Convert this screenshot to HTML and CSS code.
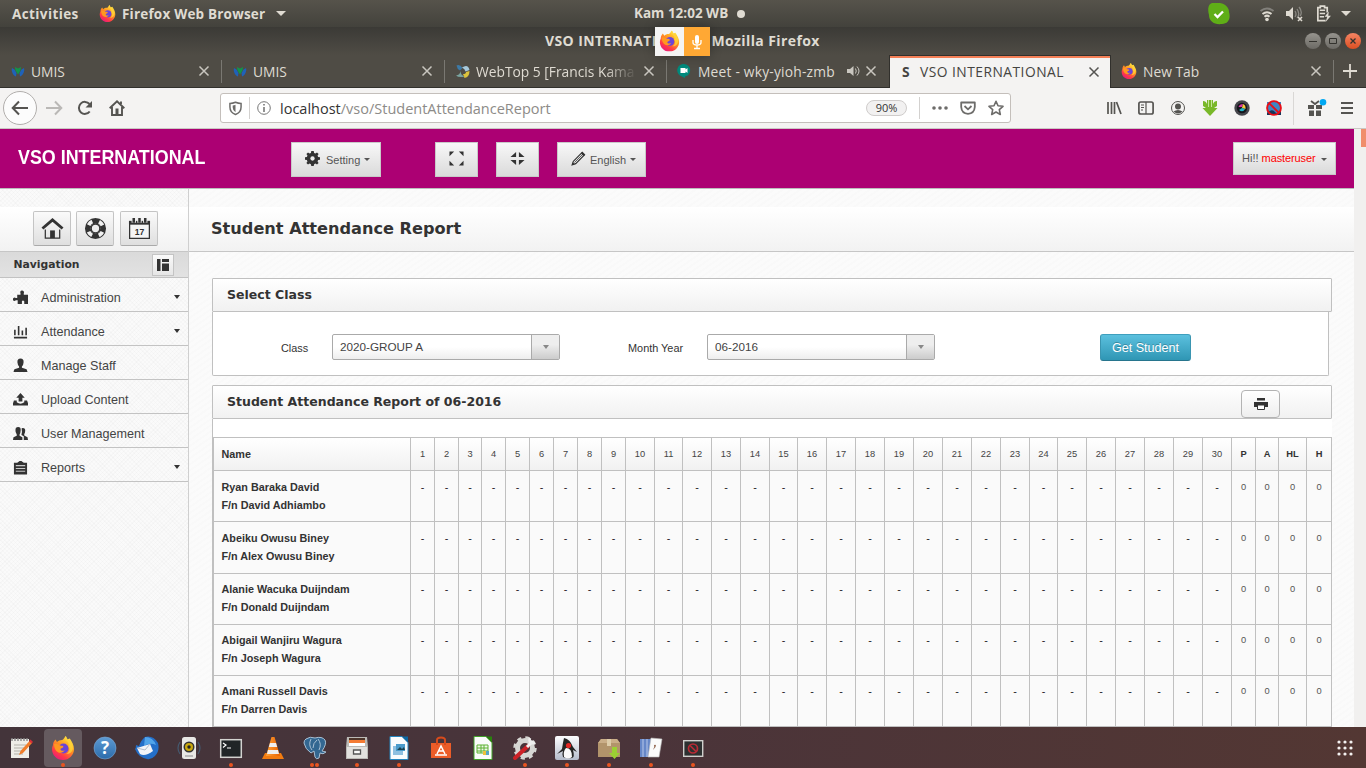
FILE: index.html
```html
<!DOCTYPE html>
<html lang="en">
<head>
<meta charset="utf-8">
<title>VSO INTERNATIONAL</title>
<link rel="stylesheet" href="styles.css">
</head>
<body>
<svg class="defs" aria-hidden="true">
  <defs>
    <linearGradient id="ffBody" x1="0.8" y1="0" x2="0.2" y2="1"><stop offset="0" stop-color="#fff04a"/><stop offset=".4" stop-color="#ff9a1f"/><stop offset=".75" stop-color="#ff3a47"/><stop offset="1" stop-color="#e31587"/></linearGradient>
    <linearGradient id="blue" x1="0" y1="0" x2="0" y2="1"><stop offset="0" stop-color="#5d9ad3"/><stop offset="1" stop-color="#2c6cab"/></linearGradient>
    <linearGradient id="cone" x1="0" y1="0" x2="1" y2="0"><stop offset="0" stop-color="#ffa23a"/><stop offset="1" stop-color="#e86300"/></linearGradient>
    <linearGradient id="steel" x1="0" y1="0" x2="0" y2="1"><stop offset="0" stop-color="#fdfdff"/><stop offset="1" stop-color="#b4bccb"/></linearGradient>
  </defs>
  <symbol id="firefox" viewBox="0 0 24 24">
    <path d="M2 9C2 7 3 5 4.500 3.500L6 6c1.200-1.300 3-2 5-2 1 0 1.800-1.300 3.600-4 1 1 1.400 2.600 1.400 3.500l2.800-1C21 6 23 9 23 13c0 6-4.800 11-11 11S1 19.200 1 13c0-1.400.4-2.700 1-4z" fill="url(#ffBody)"/>
    <circle cx="12.500" cy="12.500" r="5" fill="#6b45d8"/>
    <path d="M3 8c3-1 5 .5 6 1.500 2 .2 3.800.2 3.300 1.500-.6 1.400-2.700 1-2.800 2.300 0 1.500 2 2 4.200 1-1 2.300-4.200 3.200-6.700 2C4.500 15 3 11.500 3 8z" fill="#ff9820"/>
    <path d="M14 3c3.500 2.500 4 5 3.500 7.500C19.500 13 18 17 15 18c5 .5 8-4 6.500-9C20 5.500 17 4.500 14.500 0z" fill="#ffd83a" opacity=".75"/>
  </symbol>
  <symbol id="close" viewBox="0 0 12 12"><path d="M1.500 1.500l9 9M10.500 1.500l-9 9" fill="none" stroke="currentColor" stroke-width="1.500"/></symbol>
  <symbol id="umis" viewBox="0 0 14 14"><path d="M1 4l2.500 1.500L5.500 9 5 12.500C2 11.500 0 7 1 4zM13 4l-2.500 1.500L8.500 9l.5 3.500c3-1 5-5.500 4-8.500z" fill="#1f62b8"/><path d="M4 3l3 1.500L10 3l-.5 3.500L7 10.500 4.500 6.500z" fill="#12944a"/></symbol>
</svg>

<header class="topbar">
  <span class="activities">Activities</span>
  <svg class="tb-fox"><use href="#firefox"/></svg>
  <span class="appname">Firefox Web Browser</span>
  <i class="tri"></i>
  <span class="clock">Kam 12:02 WB</span><i class="clock-dot"></i>
  <div class="tray">
    <svg class="skype" viewBox="0 0 22 22"><path d="M5 0h7c6 1 9 5 9 9 2 7-1 12-7 12C6 22 1 18 1 12-1 5 1 0 5 0z" fill="#5fae17"/><path d="M6.500 11l3 3L15 8.500" fill="none" stroke="#fff" stroke-width="2.300"/></svg>
    <svg class="wifi" viewBox="0 0 16 16" fill="none" stroke-width="2"><path d="M1.500 5Q8 0 14.500 5" stroke="#82807b"/><path d="M3.500 8Q8 4.500 12.500 8M5.500 10.700Q8 8.500 10.500 10.700" stroke="#dfdbd2"/><circle cx="8" cy="13.500" r="1.800" fill="#dfdbd2"/></svg>
    <svg class="vol" viewBox="0 0 17 16"><path d="M0 5h3l4-4v13l-4-4H0z" fill="#dfdbd2"/><path d="M9 5q2 3 0 6M11 3q3.500 5 0 9M13 1q4 5 1 9" fill="none" stroke="#8b8983" stroke-width="1.300"/><path d="M12 11l4 4m0-4l-4 4" stroke="#dfdbd2" stroke-width="1.600"/></svg>
    <svg class="bat" viewBox="0 0 14 16"><path d="M9 14.700H1.700V2.500H4V1h4v1.500h2.500V7" fill="none" stroke="#dfdbd2" stroke-width="1.600"/><path d="M3.500 5h5M3.500 8h5M3.500 11h4" stroke="#dfdbd2" stroke-width="1.500"/><path d="M12 6l-4 5h2.500L9 16l5-6h-2.500z" fill="#dfdbd2"/></svg>
    <i class="tri"></i>
  </div>
</header>

<div class="titlebar">
  <span class="title">VSO INTERNATIONAL - Mozilla Firefox</span>
  <div class="sharing">
    <svg viewBox="0 0 24 24"><use href="#firefox"/></svg>
    <b><svg viewBox="0 0 12 16"><rect x="4" y="1" width="4" height="9" rx="2" fill="#fff"/><path d="M2 6v2.500Q2 11 6 11t4-2.500V6M6 11v3M3 14.500h6" fill="none" stroke="#fff" stroke-width="1.300"/></svg></b>
  </div>
  <div class="winbtns"><i><svg viewBox="0 0 16 16"><path d="M4 8.500h8" stroke="#33322e"/></svg></i><i><svg viewBox="0 0 16 16"><path d="M4.500 5.500h7v5h-7z" stroke="#33322e" fill="none"/></svg></i><i class="x"><svg viewBox="0 0 16 16"><path d="M5.500 5.500l5 5m0-5l-5 5" stroke="#33322e" stroke-width="1.300"/></svg></i></div>
</div>

<nav class="tabs">
  <div class="tab t1"><svg class="fav"><use href="#umis"/></svg><span>UMIS</span><svg class="cl"><use href="#close"/></svg></div>
  <div class="tab t2"><svg class="fav"><use href="#umis"/></svg><span>UMIS</span><svg class="cl"><use href="#close"/></svg></div>
  <div class="tab t3"><svg class="fav" viewBox="0 0 14 14"><path d="M.5 1.500Q4 0 6.500 4L4 6.500Q1 5 .5 1.500z" fill="#3d7aa7"/><path d="M6 3.500Q12-.5 13.500 6L9.500 7.500Q9 5 6 3.500z" fill="#a6c9dc"/><path d="M13.500 7q0 6-5 7L7 10q3 0 3-2z" fill="#dcc43c"/><path d="M4.500 7q0 4 4 5.500Q3 14 0 11.500q4-.5 4.500-4.500z" fill="#7ba5a0"/></svg><span class="fade">WebTop 5 [Francis Kama</span><svg class="cl"><use href="#close"/></svg></div>
  <div class="tab t4"><svg class="fav" viewBox="0 0 14 14"><path d="M7 0a6.300 6.300 0 0 1 1 12.500V14L5 12.400A6.300 6.300 0 0 1 7 0z" fill="#00897b"/><path d="M3.500 4h5v1.500L10.500 4v5L8.500 7.500V9h-5z" fill="#fff"/></svg><span>Meet - wky-yioh-zmb</span><svg class="spk" viewBox="0 0 14 12"><path d="M0 4h3l3.500-3v10L3 8H0z" fill="#c9c6bf"/><path d="M8.500 3.500q1.500 2.500 0 5M10 1.500q4 4.500 0 9" fill="none" stroke="#c9c6bf"/></svg><svg class="cl"><use href="#close"/></svg></div>
  <div class="tab t5"><b>S</b><span>VSO INTERNATIONAL</span><svg class="cl"><use href="#close"/></svg></div>
  <div class="tab t6"><svg class="fav"><use href="#firefox"/></svg><span>New Tab</span><svg class="cl"><use href="#close"/></svg></div>
  <div class="newtab"><svg viewBox="0 0 14 14"><path d="M7 0v14M0 7h14" stroke="#dfdbd2" stroke-width="1.800"/></svg></div>
</nav>

<div class="toolbar">
  <div class="back"><svg viewBox="0 0 18 16"><path d="M17 8H2M8 1.500L1.700 8 8 14.500" fill="none" stroke="#555451" stroke-width="2"/></svg></div>
  <svg class="fwd" viewBox="0 0 18 16"><path d="M1 8h15M10 1.500L16.300 8 10 14.500" fill="none" stroke="#bab8b6" stroke-width="2"/></svg>
  <svg class="reload" viewBox="0 0 16 16"><path d="M12.700 11.500A6 6 0 1 1 12.500 4" fill="none" stroke="#555451" stroke-width="2"/><path d="M15 1v6.500H8.500z" fill="#555451"/></svg>
  <svg class="home" viewBox="0 0 16 16"><path d="M.7 8.300L8 1.300l7.300 7M3 7v8h10V7M12 1.500V4" fill="none" stroke="#555451" stroke-width="1.900"/><path d="M6.500 8.500h3V14h-3z" fill="#555451"/></svg>
  <div class="urlbar">
    <svg class="shield" viewBox="0 0 14 15"><path d="M1 2q3 0 6-1.200Q10 2 13 2v4q0 6-6 8-6-2-6-8z" fill="none" stroke="#6d6c6a" stroke-width="1.600"/><path d="M7 3.500q-1.500.6-3 .7V6.500q0 3.500 3 5z" fill="#6d6c6a"/></svg>
    <i class="vline"></i>
    <svg class="info" viewBox="0 0 14 14"><circle cx="7" cy="7" r="6.300" fill="none" stroke="#777"/><path d="M7 6v5M7 3v1.600" stroke="#777" stroke-width="1.600"/></svg>
    <span class="url"><b>localhost</b>/vso/StudentAttendanceReport</span>
    <span class="zoom">90%</span>
    <i class="vline"></i>
    <svg class="dots" viewBox="0 0 16 4"><circle cx="2" cy="2" r="1.800"/><circle cx="8" cy="2" r="1.800"/><circle cx="14" cy="2" r="1.800"/></svg>
    <svg class="pocket" viewBox="0 0 16 14"><path d="M1.200 1.500h13.600V6q-.5 6.500-6.800 6.800Q1.700 12.500 1.200 6z" fill="none" stroke="#6d6c6a" stroke-width="1.800" stroke-linejoin="round"/><path d="M4.500 5L8 8.300 11.500 5" fill="none" stroke="#6d6c6a" stroke-width="1.800"/></svg>
    <svg class="star" viewBox="0 0 16 16"><path d="M8 1.300l2 4.500 5 .5-3.700 3.300 1 4.900L8 12l-4.300 2.500 1-4.900L1 6.300l5-.5z" fill="none" stroke="#6d6c6a" stroke-width="1.600" stroke-linejoin="round"/></svg>
  </div>
  <div class="ext">
    <span><svg viewBox="0 0 16 16"><path d="M2 2v12M5.500 2v12M8.500 2v12M10.500 2l4.500 12" fill="none" stroke="#555451" stroke-width="1.700"/></svg></span>
    <span><svg viewBox="0 0 16 16"><rect x=".9" y="2" width="14.200" height="12" rx="1.800" fill="none" stroke="#555451" stroke-width="1.700"/><path d="M8 2v12M3 5h3M3 7.500h3M3 10h2" stroke="#555451" stroke-width="1.200"/></svg></span>
    <span><svg viewBox="0 0 16 16"><circle cx="8" cy="8" r="6.500" fill="none" stroke="#555451"/><circle cx="8" cy="6.500" r="3" fill="#555451"/><path d="M3.500 11.500Q8 8.500 12.500 11.500 8 15.500 3.500 11.500z" fill="#555451"/></svg></span>
    <span><svg viewBox="0 0 16 16"><path d="M1 1q3 0 4 3V0h6v4q1-3 4-3v5l-3 2h3.500L8 16 .5 8H4L1 6z" fill="#79b829"/><path d="M6.500 0v7M9.500 0v7" stroke="#c4e596"/></svg></span>
    <span><svg viewBox="0 0 16 16"><circle cx="8" cy="8" r="7.700" fill="#45454b"/><circle cx="8" cy="8" r="5.200" fill="#15151b"/><path d="M4.500 7q1-3 4.500-3L8 7z" fill="#da35a2"/><path d="M9 4q3 1 2.500 5L8 8z" fill="#f5c83e"/><path d="M11 9q-2 4-6 1l3-2z" fill="#20b6c9"/></svg></span>
    <span><svg viewBox="0 0 16 16"><rect x="1" y="2" width="14" height="13" fill="#3f86c4"/><path d="M1 13q5-5 8-1t6-2v5H1z" fill="#173458"/><circle cx="8" cy="8" r="6.900" fill="none" stroke="#e80e17" stroke-width="1.900"/><path d="M3 3l10 10" stroke="#e80e17" stroke-width="1.900"/></svg></span>
  </div>
  <div class="extend">
    <svg class="gift" viewBox="0 0 20 18"><path d="M1 6h6v4H1zM9 6h6v4H9zM2 11.500h5V17H2zM9 11.500h5V17H9z" fill="#555451"/><path d="M4 2l4 3 4-3" fill="none" stroke="#555451" stroke-width="1.800"/><circle cx="16" cy="3.300" r="3.300" fill="#00a8f3"/></svg>
    <svg class="menu" viewBox="0 0 12 12"><path d="M0 1h12M0 6h12M0 11h12" stroke="#555451" stroke-width="2"/></svg>
  </div>
</div>

<div class="viewport">
  <div class="page">
    <header class="masthead">
      <div class="brand">VSO INTERNATIONAL</div>
      <button class="mbtn b-set"><svg viewBox="0 0 16 16"><path d="M6.700 0h2.600l.4 2 1.400.6L12.800 1.500l1.700 1.700-1.100 1.700.6 1.400 2 .4v2.600l-2 .4-.6 1.400 1.100 1.700-1.700 1.700-1.700-1.100-1.400.6-.4 2H6.700l-.4-2-1.400-.6-1.700 1.100-1.700-1.700 1.100-1.700L2 9.700l-2-.4V6.700l2-.4.6-1.400L1.500 3.200l1.700-1.700 1.700 1.100L6.300 2z" fill="#333"/><circle cx="8" cy="8" r="2.300" fill="#ececec"/></svg><span>Setting</span><i class="caret"></i></button>
      <button class="mbtn b-full"><svg viewBox="0 0 16 16" fill="#333"><path d="M.5.500h5l-5 5zM15.500.500v5l-5-5zM.5 15.500v-5l5 5zM15.500 15.500h-5l5-5z"/></svg></button>
      <button class="mbtn b-comp"><svg viewBox="0 0 16 16" fill="#333"><path d="M6.500 6.500h-6l6-5.500zM9.500 6.500V1l6 5.500zM6.500 9.500V15l-6-5.500zM9.500 9.500h6l-6 5.500z"/></svg></button>
      <button class="mbtn b-lang"><svg viewBox="0 0 16 16"><path d="M2.500 11L12 1.500l2.500 2.500L5 13.500l-3.800 1.300z" fill="#eee" stroke="#333" stroke-width="1.200"/><path d="M3.700 12.300L13 3" stroke="#333" stroke-width=".8"/><path d="M12 1l3 3-1.500 1.500-3-3zM1 15l1-3 2 2z" fill="#333"/></svg><span>English</span><i class="caret"></i></button>
      <button class="mbtn b-user"><span>Hi!! <em>masteruser</em></span><i class="caret"></i></button>
    </header>
    <div class="columns">
      <aside class="side">
        <div class="quick">
          <button><svg viewBox="0 0 24 24"><path d="M1.500 12L12 3l10.500 9" fill="none" stroke="#333" stroke-width="3"/><path d="M4.500 13v9h15v-9" fill="none" stroke="#333" stroke-width="1.300"/><path d="M9.500 14h5v8h-5z" fill="#333"/></svg></button>
          <button><svg viewBox="0 0 24 24"><circle cx="12" cy="12" r="8" fill="none" stroke="#333" stroke-width="6"/><circle cx="12" cy="12" r="8" fill="none" stroke="#f1f1f1" stroke-width="4" stroke-dasharray="5.300 7.266" stroke-dashoffset="-3.600"/><circle cx="12" cy="12" r="4.500" fill="#eee" stroke="#333" stroke-width="1.400"/></svg></button>
          <button><svg viewBox="0 0 24 24"><path d="M1.700 5h20.600v17.300H1.700z" fill="#f5f5f5" stroke="#333" stroke-width="1.300"/><path d="M1 4h22v4H1z" fill="#333"/><path d="M6 1v5M12 1v5M18 1v5" stroke="#eee" stroke-width="4.500"/><path d="M6 1v5M12 1v5M18 1v5" stroke="#333" stroke-width="2.600"/><text x="12" y="18.500" class="cal">17</text></svg></button>
        </div>
        <div class="navhead"><span>Navigation</span><b><svg viewBox="0 0 12 12" fill="#333"><path d="M0 0h3.500v12H0zM5 0h7v3H5zM5 4.500h7V12H5z"/></svg></b></div>
        <a class="nav"><svg viewBox="0 0 16 16"><path d="M4.500 5H8V3.500Q7 1 9.500.500q3 .5 2 3V5H16v10h-4v-3q-1.500-1.500-2.500 0v3H5v-4H3Q1.500 12.500 0 11V9q1.500-1.500 3-.5h1.500z" fill="#333"/></svg><span>Administration</span><i class="caret"></i></a>
        <a class="nav"><svg viewBox="0 0 16 16"><path d="M2 6v6M6 2v10M10 7v5M14 4v8M1 14.500h14" stroke="#333" stroke-width="1.700"/></svg><span>Attendance</span><i class="caret"></i></a>
        <a class="nav"><svg viewBox="0 0 16 16" fill="#333"><path d="M8 .500q3.500 0 3.300 4Q11 8 9.500 9v1.500l5 1.500 1 3H.5l1-3 5-1.500V9Q5 8 4.700 4.500 4.500.500 8 .500z"/></svg><span>Manage Staff</span></a>
        <a class="nav"><svg viewBox="0 0 16 16" fill="#333"><path d="M8 1l4.500 5H10v4H6V6H3.500zM1 9h3v2q4 3 8 0V9h3l1 3v2.500H0V12z"/></svg><span>Upload Content</span></a>
        <a class="nav"><svg viewBox="0 0 16 16" fill="#333"><path d="M5.500 1q3 0 2.700 3.500Q8 8 7 9v1.500l3 1.500v3H0l.5-3L4 10.500V9Q2.500 7 2.600 4.500 2.600 1 5.500 1z"/><path d="M10.500 2q2.800 0 2.500 3.200Q12.700 8 12 8.500V10l3.500 2 .5 3h-4.500v-4L9 9.500q1-2.500.2-7z"/></svg><span>User Management</span></a>
        <a class="nav"><svg viewBox="0 0 16 16"><path d="M1 3h3.500L7 1h2l2.500 2H15v12.500H1z" fill="#333"/><path d="M3 6h10M3 9h10M3 12h10" stroke="#c8c8c8" stroke-width="1.200"/></svg><span>Reports</span><i class="caret"></i></a>
      </aside>
      <main class="main">
        <h1>Student Attendance Report</h1>
        <section class="box select">
          <h2>Select Class</h2>
          <form>
            <label class="l1">Class</label><div class="combo"><span>2020-GROUP A</span><i></i></div>
            <label class="l2">Month Year</label><div class="combo"><span>06-2016</span><i></i></div>
            <button type="button" class="go">Get Student</button>
          </form>
        </section>
        <section class="box report">
          <h2><span>Student Attendance Report of 06-2016</span><b class="print"><svg viewBox="0 0 14 12"><path d="M3 0h8v2.500H3zM0 4h14v5h-3V7H3v2H0z" fill="#333"/><path d="M3.500 7h7v4.500h-7z" fill="#fff" stroke="#333"/></svg></b></h2>
          <table id="attendance"></table>
        </section>
      </main>
    </div>
  </div>
  <div class="scroll"><i></i></div>
</div>

<footer class="dock">
  <span><svg viewBox="0 0 24 24"><path d="M2 3h18v19H2z" fill="#efeee8"/><path d="M5 9h12M5 12h10M5 15h8M5 18h9" stroke="#b3b1a9"/><path d="M3 2v3M6 2v3M9 2v3M12 2v3M15 2v3M18 2v3" stroke="#888" stroke-width="1.400"/><path d="M20.500 5l2.500 2-9 10-4 2 1.500-4z" fill="#f07d2a"/><path d="M20 5l1.500-1.500L24 6l-1.500 1.500z" fill="#d92f38"/></svg></span>
  <span class="on run"><svg viewBox="0 0 24 24"><use href="#firefox"/></svg></span>
  <span><svg viewBox="0 0 24 24"><circle cx="12" cy="12" r="11" fill="url(#blue)" stroke="#7ba8d5" stroke-width=".6"/><text x="12" y="18" class="q">?</text></svg></span>
  <span><svg viewBox="0 0 24 24"><path d="M10 1q8-2 13 6 2 8-3 13-4 4-8 3Q3 21 0 13q1-1 1-4l3 1Q6 4 10 1z" fill="#246fc8"/><path d="M10 1q8 0 11 8-6-3-12 1z" fill="#51a5ea"/><path d="M2 12l13-4 3 7q-8 6-13 3z" fill="#f2f4f8"/><path d="M2 12l8 2 5-6" fill="none" stroke="#b3bdca"/></svg></span>
  <span><svg viewBox="0 0 24 24"><path d="M3 6q-4 6 0 12M21 6q4 6 0 12" fill="none" stroke="#45596f" stroke-width="1.200"/><rect x="5" y="1" width="14" height="22" rx="2.500" fill="#e8e8e5"/><circle cx="12" cy="11" r="5.500" fill="#333"/><circle cx="12" cy="11" r="4" fill="#c8a70e"/><circle cx="12" cy="11" r="1.700" fill="#222"/><path d="M8 20h8" stroke="#aaa" stroke-width="1.500"/></svg></span>
  <span class="run"><svg viewBox="0 0 24 24"><rect x="1.700" y="3.700" width="20.600" height="17.600" fill="#202527" stroke="#d3d3d0" stroke-width="1.500"/><path d="M4 7l3 2-3 2.500M8 12h4" fill="none" stroke="#fff" stroke-width="1.200"/></svg></span>
  <span><svg viewBox="0 0 24 24"><path d="M4 17h16l3 6H1z" fill="#f27b10"/><path d="M10.500 1h3L19 20H5z" fill="url(#cone)"/><path d="M9 7h6l1.200 4H7.800zM7 14h10l1 4H6z" fill="#eee"/></svg></span>
  <span class="run two"><svg viewBox="0 0 24 24"><path d="M3 3q4-3 9-1 7-2 10 2 2 4-3 11l4 1q-3 3-6 1l-1 5q-3 2-4-1l-1-6-3 2Q2 13 1 7q0-3 2-4z" fill="#336791" stroke="#a9c0d4"/><path d="M8 3Q5 9 9 14M15 3q4 5 1 11M10 12q0-5 4-8" fill="none" stroke="#a9c0d4"/></svg></span>
  <span class="run"><svg viewBox="0 0 24 24"><path d="M2 1h20l1 10v12H1V11z" fill="#bbbab6"/><path d="M4 2h16v3H4z" fill="#4d352a"/><path d="M4 4h16v3H4z" fill="#f47b33"/><path d="M4 7h16v3H4z" fill="#fff"/><path d="M2 11h20v11H2z" fill="#e2e1de"/><path d="M8.500 14h7v4h-7z" fill="#fafafa" stroke="#555" stroke-width="1.300"/></svg></span>
  <span class="run"><svg viewBox="0 0 24 24"><path d="M3 .500h12l6 6V23.500H3z" fill="#fafcfd" stroke="#2484bd"/><path d="M15 .500h6v6z" fill="#0c68a3"/><path d="M6 10h10v9H6z" fill="#8fc0e0"/><path d="M9 8h9v7H9z" fill="#4a9bcb"/><path d="M10 14l3-3 2 2 2-2 1 3z" fill="#1a4250"/></svg></span>
  <span><svg viewBox="0 0 24 24"><path d="M2 7h20v15H2z" fill="#ec5c28"/><path d="M8 9V4q0-2.500 4-2.500T16 4v5" fill="none" stroke="#d64b1c" stroke-width="2"/><path d="M6 19h12M8 18l4-8 4 8M9 15h6" fill="none" stroke="#fff" stroke-width="1.500"/></svg></span>
  <span><svg viewBox="0 0 24 24"><path d="M3 .500h12l6 6V23.500H3z" fill="#fafcfa" stroke="#43a22b"/><path d="M15 .500h6v6z" fill="#28820c"/><path d="M6 9h11v8H6z" fill="#eff8e9" stroke="#5db233"/><path d="M6 12h11M6 15h11M10 9v8M13 9v8" stroke="#5db233"/><path d="M12 15h6v4h-6z" fill="#efc23b"/><path d="M15 15h3v4h-3z" fill="#57a7c6"/></svg></span>
  <span class="run"><svg viewBox="0 0 24 24"><circle cx="12" cy="12" r="7.500" fill="none" stroke="#d6d6d3" stroke-width="5"/><circle cx="12" cy="12" r="10.500" fill="none" stroke="#d6d6d3" stroke-width="2.500" stroke-dasharray="4.200 4.047"/><path d="M2 22L15 10" stroke="#cc2127" stroke-width="4" stroke-linecap="round"/><path d="M14 11l6-6" stroke="#f1f1f1" stroke-width="3"/><path d="M17 2q-2 6 5 5" fill="none" stroke="#eee" stroke-width="2.500"/></svg></span>
  <span class="run"><svg viewBox="0 0 24 24"><rect width="24" height="24" rx="2" fill="url(#steel)"/><path d="M9 2q6 1 9 9l4 5-4-2q2 7-1 8-6 1-9-1-1-4 0-6l-6 3 5-5q1-7 2-11z" fill="#252525"/><path d="M11 12q6 0 6 9-4 3-8 0-1-6 2-9z" fill="#fafafa"/><circle cx="13.500" cy="9.500" r="2.600" fill="#e32623"/></svg></span>
  <span class="run"><svg viewBox="0 0 24 24"><path d="M1 7l3-4h16l3 4v14H1z" fill="#b2946b"/><path d="M1 7l3-4h16l3 4z" fill="#caae88"/><path d="M10 3h4v7h-4z" fill="#ddcca9"/><path d="M15 11h5v6h3l-5.500 6L12 17h3z" fill="#9bd033"/></svg></span>
  <span class="run"><svg viewBox="0 0 24 24"><path d="M1 3h11v18H1z" fill="#6687c8"/><path d="M4 3v18M8 3v18" stroke="#b7c7e9"/><path d="M12 2l11 1-3 18H9z" fill="#fbfbfb" stroke="#bbb" stroke-width=".6"/><path d="M15 9q3-1 1.500 2L14 14q2-3 1-5z" fill="#956b55"/></svg></span>
  <span class="run"><svg viewBox="0 0 24 24"><rect x="2.700" y="4.700" width="19" height="15.600" fill="#2c3030" stroke="#cfcfcc" stroke-width="1.400"/><circle cx="12" cy="12.500" r="4.500" fill="none" stroke="#b82b35" stroke-width="1.700"/><path d="M9 9.500l6 6" stroke="#b82b35" stroke-width="1.700"/></svg></span>
  <svg class="apps" viewBox="0 0 16 16" fill="#f4f1f0"><circle cx="2" cy="2" r="1.600"/><circle cx="8" cy="2" r="1.600"/><circle cx="14" cy="2" r="1.600"/><circle cx="2" cy="8" r="1.600"/><circle cx="8" cy="8" r="1.600"/><circle cx="14" cy="8" r="1.600"/><circle cx="2" cy="14" r="1.600"/><circle cx="8" cy="14" r="1.600"/><circle cx="14" cy="14" r="1.600"/></svg>
</footer>
<script src="script.js"></script>
</body>
</html>
```

FILE: styles.css
```css
* { box-sizing: border-box; }
body { margin: 0; width: 1366px; height: 768px; overflow: hidden; display: flex; flex-direction: column; font-family: "Liberation Sans", Arial, sans-serif; color: #333; }
svg { display: block; flex: none; }
i { flex: none; }
.defs { position: absolute; width: 0; height: 0; }
button { font: inherit; padding: 0; margin: 0; }

.topbar, .titlebar, .tabs, .toolbar { font-family: "Open Sans", "Noto Sans", sans-serif; flex: none; display: flex; align-items: center; white-space: nowrap; }
.topbar { height: 27px; background: linear-gradient(#56534b, #43423c); color: #dfdbd2; font-weight: 700; font-size: 13.500px; padding-left: 12px; }
.activities { width: 87px; letter-spacing: .4px; }
.tb-fox { width: 17px; height: 17px; margin-right: 6px; }
.appname { width: 154px; letter-spacing: .2px; }
.tri { width: 0; height: 0; border: 5px solid transparent; border-top-color: #dfdbd2; border-bottom: 0; }
.clock { margin-left: 348px; width: 103px; padding-bottom: 1px; }
.clock-dot { width: 8px; height: 8px; border-radius: 50%; background: #dfdbd2; }
.tray { display: flex; align-items: center; margin-left: 463px; }
.skype { width: 22px; height: 22px; margin-right: 29px; }
.wifi { width: 16px; height: 16px; margin-right: 11px; }
.vol { width: 17px; height: 16px; margin-right: 13px; }
.bat { width: 15px; height: 17px; margin-right: 10px; }

.titlebar { height: 28px; background: linear-gradient(#3b3a36, #4f4c45); color: #dfdbd2; font-weight: 700; font-size: 14px; padding-left: 545px; position: relative; }
.title { width: 768px; letter-spacing: .4px; padding-bottom: 1px; }
.sharing { position: absolute; left: 655px; top: 0; width: 55px; height: 29px; display: flex; background: #f4f4f4; box-shadow: 0 0 12px rgba(0,0,0,.3); z-index: 1; }
.sharing > svg { width: 21px; height: 22px; margin: 3px 4px; }
.sharing b { width: 26px; background: #ffa834; display: flex; align-items: center; justify-content: center; }
.sharing b svg { width: 12px; height: 16px; }
.winbtns { display: flex; gap: 4px; margin-left: -8px; }
.winbtns i { width: 16px; height: 16px; border-radius: 50%; background: linear-gradient(#96948e, #6c6a65); }
.winbtns i.x { background: linear-gradient(#f58463, #dc4f22); }

.tabs { height: 33px; background: #4f4c45; border-bottom: 1px solid #31302c; font-size: 13.800px; color: #dfdbd2; align-items: stretch; }
.tab { display: flex; align-items: center; position: relative; }
.tab::after { content: ""; position: absolute; right: 0; top: 5px; bottom: 4px; width: 1px; background: #7a7872; }
.t4::after, .t5::after { display: none; }
.t1 { width: 222px; } .t2 { width: 223px; } .t3 { width: 222px; } .t4 { width: 222px; } .t5 { width: 222px; } .t6 { width: 223px; }
.fav { width: 14px; height: 14px; margin-left: 11px; margin-right: 6px; }
.t3 .fav { margin-left: 11px; }
.t4 .fav { margin-left: 10px; margin-right: 7px; }
.t4 > span { letter-spacing: .2px; }
.t6 .fav { width: 16px; height: 16px; margin-left: 10px; }
.cl { width: 12px; height: 12px; margin-left: auto; margin-right: 12px; color: #c9c6bf; }
.t5 .cl { color: #555451; margin-right: 11px; }
.spk { width: 14px; height: 12px; margin-left: auto; }
.spk + .cl { margin-left: 4px; }
.t5 { background: #f4f3f2; color: #454441; box-shadow: inset 0 1px #31302c, inset 1px 0 #31302c, inset -1px 0 #31302c; margin-bottom: -1px; }
.t5::before { content: ""; position: absolute; left: 1px; right: 1px; top: 1px; height: 2px; background: #f47f56; }
.t5 b { margin-left: 13px; width: 18px; }
.t5 > span { letter-spacing: .48px; }
.fade { width: 161px; overflow: hidden; -webkit-mask-image: linear-gradient(90deg, #000 80%, transparent); mask-image: linear-gradient(90deg, #000 80%, transparent); }
.newtab { padding: 9px 0 0 9px; }
.newtab svg { width: 14px; height: 14px; }

.toolbar { height: 41px; background: #f4f3f2; border-bottom: 1px solid #cbc7c4; padding-left: 3px; }
.back { width: 34px; height: 34px; border-radius: 50%; border: 1px solid #b1aeac; background: #fcfcfc; display: flex; align-items: center; justify-content: center; }
.back svg { width: 18px; height: 16px; }
.fwd { width: 18px; height: 16px; margin-left: 8px; }
.reload { width: 16px; height: 16px; margin-left: 14px; }
.home { width: 16px; height: 16px; margin-left: 16px; }
.urlbar { margin-left: 95px; width: 791px; height: 30px; border: 1px solid #c4bfbb; border-radius: 3px; background: #fff; display: flex; align-items: center; }
.shield { width: 13px; height: 15px; margin: 0 7px 0 8px; }
.vline { width: 1px; height: 22px; background: #d3d1cf; }
.info { width: 14px; height: 14px; margin: 0 9px 0 7px; }
.url { font-size: 14.500px; color: #8d8b88; width: 586px; }
.url b { font-weight: 400; color: #333; }
.zoom { width: 41px; height: 16px; border: 1px solid #cfcccb; border-radius: 8px; background: #f2f1f1; font-size: 11px; line-height: 14px; text-align: center; margin-right: 12px; }
.dots { width: 16px; height: 4px; margin: 0 12px 0 12px; fill: #6d6c6a; }
.pocket { width: 16px; height: 14px; margin-right: 12px; }
.star { width: 16px; height: 16px; }
.ext { display: flex; margin-left: 87px; }
.ext span { width: 32px; display: flex; justify-content: center; }
.ext svg { width: 16px; height: 16px; }
.extend { display: flex; align-items: center; height: 33px; margin-left: 3px; border-left: 1px solid #d9d7d5; padding-left: 13px; }
.gift { width: 20px; height: 18px; }
.menu { width: 12px; height: 12px; margin-left: 14px; }

.viewport { flex: none; height: 598px; display: flex; overflow: hidden; }
.page { width: 1354px; display: flex; flex-direction: column; background: #fbfbfb; }
.scroll { width: 12px; background: #f1f0ef; }
.scroll i { display: block; width: 5px; height: 18px; margin-left: 7px; background: #f08e6c; }

.masthead { height: 60px; flex: none; background: #ac0073; border-bottom: 1px solid #bdbdbd; display: flex; align-items: flex-start; }
.brand { width: 273px; margin-left: 18px; padding-top: 16px; font: bold 20px/24px "Liberation Sans", Arial, sans-serif; color: #fff; white-space: nowrap; transform: scaleX(.894); transform-origin: 0 0; }
.mbtn { height: 35px; margin-top: 13px; border: 1px solid #c9c9c9; background: linear-gradient(#f8f8f8, #dadada); display: flex; align-items: center; font-size: 11px; color: #555; }
.mbtn svg { width: 15px; height: 15px; margin-bottom: 2px; }
.b-set { width: 90px; padding-left: 13px; }
.b-set svg { margin-right: 6px; }
.b-full, .b-comp { width: 43px; justify-content: center; }
.b-full { margin-left: 54px; }
.b-comp { margin-left: 18px; }
.b-lang { width: 89px; margin-left: 18px; padding-left: 13px; }
.b-lang svg { margin-right: 4px; }
.b-user { width: 103px; height: 33px; margin-left: auto; margin-right: 18px; padding-left: 8px; }
.b-user span { padding-bottom: 1px; }
.b-user em { color: #f00; font-style: normal; letter-spacing: -.1px; }
.caret { width: 0; height: 0; border: 3px solid transparent; border-top-color: #555; border-bottom: 0; margin-left: 4px; }
.b-user .caret { margin-left: 5px; margin-top: 2px; }

.columns { display: flex; flex: 1; min-height: 0; }
.side { width: 189px; flex: none; border-right: 1px solid #cfcfcf; padding-top: 18px; background-color: #fafafa; background-image: repeating-linear-gradient(45deg, rgba(0,0,0,.014) 0 1px, transparent 1px 3px), repeating-linear-gradient(-45deg, rgba(0,0,0,.014) 0 1px, transparent 1px 3px); }
.quick { height: 45px; background: linear-gradient(#fff, #f2f2f2); border-bottom: 1px solid #c6c6c6; display: flex; gap: 5px; padding: 4px 0 0 33px; }
.quick button { width: 38px; height: 35px; border: 1px solid #c4c4c4; border-bottom-color: #aaa; border-radius: 2px; background: linear-gradient(#fafafa, #dfdfdf); display: flex; align-items: center; justify-content: center; }
.quick button:last-child { margin-left: 1px; }
.quick svg { width: 23px; height: 23px; }
.cal { font: bold 9px "Liberation Sans", sans-serif; text-anchor: middle; fill: #333; }
.navhead { height: 26px; background: #dedede linear-gradient(#dadada, #e2e2e2); border-bottom: 1px solid #c2c2c2; display: flex; font: bold 10.800px/26px "DejaVu Sans", sans-serif; padding-left: 13.500px; }
.navhead span { width: 138px; }
.navhead b { width: 22px; height: 22px; margin-top: 2px; border: 1px solid #c4c4c4; background: linear-gradient(#fafafa, #e6e6e6); display: flex; align-items: center; justify-content: center; }
.navhead svg { width: 12px; height: 12px; }
.nav { height: 34px; border-bottom: 1px solid #c3c3c3; display: flex; align-items: center; padding: 6px 8px 0 13px; font-size: 12.600px; color: #444; }
.nav svg { width: 15px; height: 15px; margin-right: 13px; margin-bottom: 1px; }
.nav .caret { border-width: 4px 3.500px 0; border-top-color: #333; margin-left: auto; margin-bottom: 2px; }

.main { flex: 1; padding-top: 18px; background-image: repeating-linear-gradient(145deg, rgba(0,0,0,.008) 0 2px, transparent 2px 5px); }
h1 { margin: 0 0 26px; height: 45px; border-bottom: 1px solid #c6c6c6; background: linear-gradient(#fff, #f2f2f2); font: bold 16.150px/43px "DejaVu Sans", sans-serif; padding-left: 22px; }
.box { margin-left: 23px; width: 1120px; }
h2 { margin: 0; height: 34px; border: 1px solid #c0c0c0; border-radius: 1px; background: linear-gradient(#fff, #f1f1f1); font: bold 12.520px/31px "DejaVu Sans", sans-serif; padding-left: 14px; }
.select form { width: 1117px; height: 64px; border: 1px solid #c0c0c0; border-top: 0; background: #fff; display: flex; align-items: flex-start; font-size: 10.900px; padding-top: 22px; border-radius: 0 0 2px 2px; }
.select label { line-height: 28px; }
.l1 { width: 51px; margin-left: 68px; }
.l2 { width: 79px; margin-left: 68px; }
.combo { width: 228px; height: 26px; border: 1px solid #aaa; border-radius: 2px; display: flex; background: linear-gradient(#fff 50%, #eee); font-size: 11.700px; line-height: 24px; color: #444; padding-left: 7px; }
.combo span { flex: 1; }
.combo i { width: 28px; border-left: 1px solid #aaa; background: linear-gradient(#eee 40%, #ccc); display: flex; align-items: center; justify-content: center; }
.combo i::before { content: ""; border: 3px solid transparent; border-top: 4px solid #888; border-bottom: 0; }
.go { width: 91px; height: 27px; margin-left: 165px; border: 1px solid #3a8ba6; border-color: #3f9fbd #3a95b1 #27758d; border-radius: 3px; background: linear-gradient(#5bc0de, #2f96b4); color: #fff; font-size: 12.600px; text-shadow: 0 -1px rgba(0,0,0,.25); }
.report { margin-top: 9px; background: #fff; }
.report h2 { display: flex; }
.report h2 span { width: 1014px; }
.print { width: 39px; height: 28px; margin-top: 4px; border: 1px solid #b3b3b3; border-radius: 4px; background: linear-gradient(#fff, #eee); display: flex; align-items: center; justify-content: center; }
.print svg { width: 14px; height: 12px; }
table { width: 1120px; border-left: 1px solid #c0c0c0; border-spacing: 0; table-layout: fixed; padding-top: 18px; }
th, td { height: 51px; border: 0 solid #c0c0c0; border-width: 0 0 1px 1px; padding: 7px 0 0; background: #fafafa; font-size: 9.300px; line-height: 18px; vertical-align: top; text-align: center; }
tr > :last-child { border-right-width: 1px; }
thead th { height: 34px; border-top-width: 1px; padding-top: 7px; background: linear-gradient(#fff, #f1f1f1); font-weight: 400; color: #444; }
thead .sum { font-weight: 700; color: #333; }
tr > .name { text-align: left; padding-left: 7.500px; font-size: 10.800px; font-weight: 700; color: #333; }
tbody .tall > * { height: 52px; }
tbody .tall ~ tr > * { padding-top: 6px; }
.dash { font-size: 10.800px; color: #222; }
td.num { color: #555; }

.dock { flex: none; height: 41px; background: linear-gradient(90deg, #43343a, #4a343a 45%, #533733); display: flex; position: relative; }
.dock span { width: 42px; height: 41px; display: flex; justify-content: center; padding-top: 9px; position: relative; }
.dock span svg { width: 24px; height: 24px; margin-right: 1px; position: relative; }
.dock .on::before { content: ""; position: absolute; left: 2px; top: 2px; width: 38px; height: 38px; border-radius: 4px; background: #655a5f; }
.dock .run::after { content: ""; position: absolute; left: 19px; bottom: 1px; width: 4px; height: 4px; border-radius: 50%; background: #e95420; }
.dock .two::after { left: 16px; box-shadow: 5px 0 #e95420; }
.q { font: bold 17px "Open Sans", sans-serif; fill: #fff; text-anchor: middle; }
.apps { width: 16px; height: 16px; margin: 13px 0 0 623px; }
```

FILE: script.js
```js
const students = [
  ["Ryan Baraka David", "F/n David Adhiambo"],
  ["Abeiku Owusu Biney", "F/n Alex Owusu Biney"],
  ["Alanie Wacuka Duijndam", "F/n Donald Duijndam"],
  ["Abigail Wanjiru Wagura", "F/n Joseph Wagura"],
  ["Amani Russell Davis", "F/n Darren Davis"]
];
const widths = [197, 24, 24, 23, 24, 24, 24, 24, 24, 24, 29, 28, 29, 29, 29, 28, 29, 29, 29, 29, 29, 29, 29, 29, 28, 29, 29, 29, 29, 29, 29, 24, 23, 28, 26];
const days = Array.from({ length: 30 }, (_, i) => i + 1);
const sums = ["P", "A", "HL", "H"];
document.getElementById("attendance").innerHTML =
  "<colgroup>" + widths.map(w => `<col style="width:${w}px">`).join("") + "</colgroup>" +
  '<thead><tr><th class="name">Name</th>' +
  days.map(d => `<th>${d}</th>`).join("") +
  sums.map(s => `<th class="sum">${s}</th>`).join("") + "</tr></thead><tbody>" +
  students.map((s, i) => `<tr${i === 1 ? ' class="tall"' : ""}><th class="name">${s[0]}<br>${s[1]}</th>` +
    days.map(() => '<td class="dash">-</td>').join("") +
    sums.map(() => '<td class="num">0</td>').join("") + "</tr>").join("") + "</tbody>";
```
